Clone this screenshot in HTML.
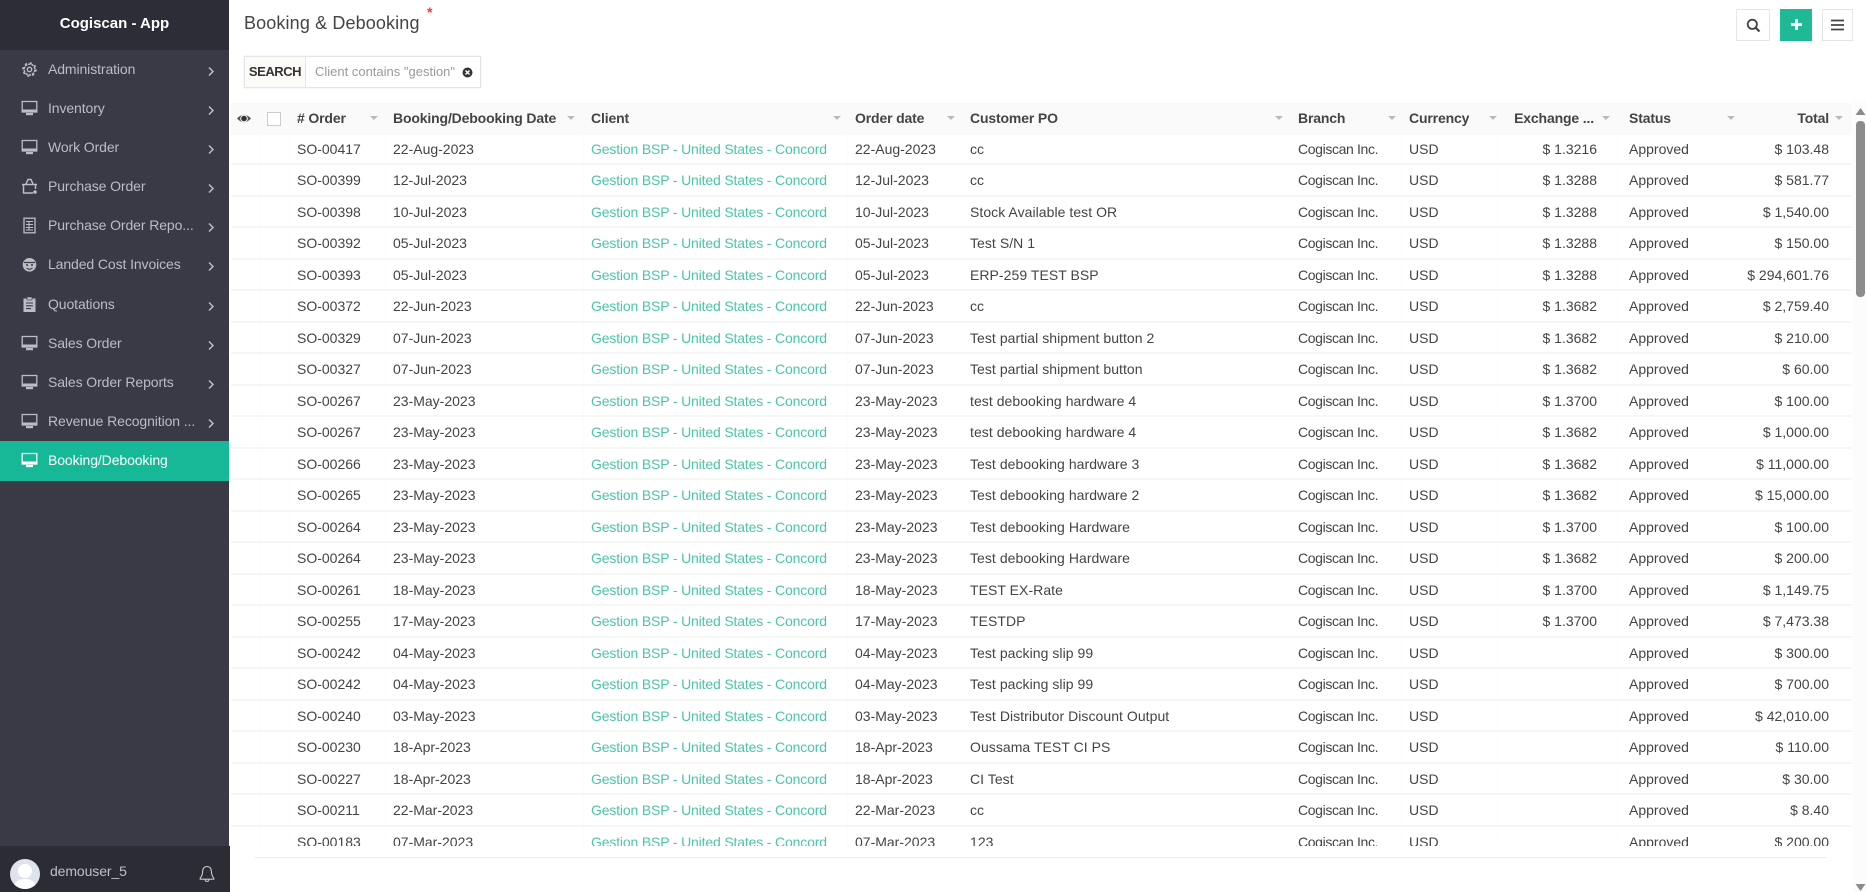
<!DOCTYPE html>
<html><head><meta charset="utf-8"><title>Booking & Debooking</title>
<style>
*{box-sizing:border-box}
html,body{margin:0;padding:0;width:1866px;height:892px;overflow:hidden;background:#fff;font-family:"Liberation Sans",sans-serif;font-size:14px;color:#444}
body{filter:blur(.3px)}
.abs{position:absolute}
#side{position:absolute;left:0;top:0;width:229px;height:892px;background:#3a3a46}
#top{position:absolute;left:0;top:0;width:229px;height:50px;background:#2d2d37;color:#fff;font-weight:bold;font-size:15px;line-height:48px;text-align:center}
.m{position:absolute;left:0;width:229px;height:39px;line-height:39px;color:#bcbcc2;font-size:14px;white-space:nowrap}
.m b{font-weight:normal;position:absolute;left:48px;letter-spacing:-.1px}
.m svg.i{position:absolute;left:21px;top:11px;width:17px;height:17px}
.m svg.c{position:absolute;left:207px;top:16px;width:8px;height:11px}
.m.a{background:#17b897;color:#fff;height:40px;top:441px}
#foot{position:absolute;left:0;top:846px;width:230px;height:46px;background:#2c2c35}
#foot .av{position:absolute;left:10px;top:13px;width:30px;height:30px;border-radius:50%;background:#dfe3ec;overflow:hidden}
#foot span{position:absolute;left:50px;top:17px;color:#bcc0c8;font-size:14px;letter-spacing:-.1px}
h1{position:absolute;left:244px;top:10px;margin:0;font-weight:normal;font-size:18px;line-height:26px;color:#444;letter-spacing:.13px}
#srch{position:absolute;left:244px;top:56px;width:237px;height:32px;border:1px solid #e4e4e4;box-shadow:0 0 1px #ddd;background:#fff}
#srch i{font-style:normal;position:absolute;left:0;top:0;width:61px;height:30px;line-height:30px;text-align:center;font-weight:bold;font-size:13px;letter-spacing:-.45px;color:#333;background:#fcfbf8;border-right:1px solid #e4e4e4}
#srch u{text-decoration:none;position:absolute;left:70px;top:0;line-height:30px;color:#999;font-size:13px;white-space:nowrap}
.btn{position:absolute;top:9px;height:32px;border:1px solid #e6e6e6;background:#fff}
#head{position:absolute;left:231px;top:103px;width:1621px;height:32px;background:#fafafa;z-index:2;font-weight:bold;line-height:31px;color:#444;letter-spacing:-.15px}
#head span{position:absolute;top:0;white-space:nowrap}
#head em{position:absolute;top:13px;width:0;height:0;border-left:4px solid transparent;border-right:4px solid transparent;border-top:4px solid #bbb}
#body{position:absolute;left:231px;top:135px;width:1621px;height:711px;overflow:hidden}
#rows{position:absolute;left:0;top:-1.5px;width:1621px}
.r{position:relative;height:31.5px;border-bottom:2px solid #f6f6f6;line-height:31px}
.r span{position:absolute;top:0;white-space:nowrap}
.r span:nth-child(1){left:66px}
.r span:nth-child(2){left:162px}
.r span:nth-child(3){left:360px;color:#4cc5a6;letter-spacing:-.16px}
.r span:nth-child(4){left:624px}
.r span:nth-child(5){left:739px;letter-spacing:.05px}
.r span:nth-child(6){left:1067px;letter-spacing:-.36px}
.r span:nth-child(7){left:1178px}
.r span:nth-child(8){right:255px}
.r span:nth-child(9){left:1398px}
.r span:nth-child(10){right:23px}
.v{position:absolute;top:135px;height:711px;width:1px;background:#fcfcfc}
</style></head><body>
<svg width="0" height="0" style="position:absolute"><defs>
<symbol id="mon" viewBox="0 0 17 17"><rect x="1.2" y="1.5" width="14.6" height="10.5" fill="none" stroke="#bcbcc2" stroke-width="1.3"/><rect x="1" y="9.5" width="15" height="3" fill="#bcbcc2"/><rect x="5" y="13" width="7" height="2.2" fill="#bcbcc2"/></symbol>
<symbol id="monw" viewBox="0 0 17 17"><rect x="1.2" y="1.5" width="14.6" height="10.5" fill="none" stroke="#fff" stroke-width="1.3"/><rect x="1" y="9.5" width="15" height="3" fill="#fff"/><rect x="5" y="13" width="7" height="2.2" fill="#fff"/></symbol>
<symbol id="chev" viewBox="0 0 8 11"><path d="M2 1.5 L6 5.5 L2 9.5" fill="none" stroke="#bcbcc2" stroke-width="1.5"/></symbol>
</defs></svg>

<div id="side">
<div id="top">Cogiscan - App</div>
<div class="m" style="top:50px"><svg class="i" viewBox="0 0 17 17"><circle cx="8.5" cy="8.5" r="5.4" fill="none" stroke="#bcbcc2" stroke-width="1.5" stroke-dasharray="2.6 .8"/><circle cx="8.5" cy="8.5" r="6.6" fill="none" stroke="#bcbcc2" stroke-width="1.4" stroke-dasharray="2.2 3"/><circle cx="8.5" cy="8.5" r="2.2" fill="none" stroke="#bcbcc2" stroke-width="1.4"/></svg><b>Administration</b><svg class="c"><use href="#chev"/></svg></div>
<div class="m" style="top:89px"><svg class="i"><use href="#mon"/></svg><b>Inventory</b><svg class="c"><use href="#chev"/></svg></div>
<div class="m" style="top:128px"><svg class="i"><use href="#mon"/></svg><b>Work Order</b><svg class="c"><use href="#chev"/></svg></div>
<div class="m" style="top:167px"><svg class="i" viewBox="0 0 17 17"><path d="M1 6.5H16M2.5 6.5V15H12M14.5 6.5V11M5 6L7 1.5H10L12 6" fill="none" stroke="#bcbcc2" stroke-width="1.5"/><circle cx="14" cy="14" r="1.8" fill="#bcbcc2"/></svg><b>Purchase Order</b><svg class="c"><use href="#chev"/></svg></div>
<div class="m" style="top:206px"><svg class="i" viewBox="0 0 17 17"><rect x="3" y="1.2" width="11" height="14.6" fill="none" stroke="#bcbcc2" stroke-width="1.3"/><path d="M5 4.5H12M5 7.5H12M5 10.5H12M5 13H12M8 4V13.5" fill="none" stroke="#bcbcc2" stroke-width="1"/></svg><b>Purchase Order Repo...</b><svg class="c"><use href="#chev"/></svg></div>
<div class="m" style="top:245px"><svg class="i" viewBox="0 0 17 17"><circle cx="8.5" cy="8.8" r="6.8" fill="#bcbcc2"/><path d="M3 6.5H14" stroke="#3a3a46" stroke-width="1.2"/><circle cx="6" cy="9" r="1" fill="#3a3a46"/><circle cx="11" cy="9" r="1" fill="#3a3a46"/><path d="M5.5 12Q8.5 14.5 11.5 12" fill="none" stroke="#3a3a46" stroke-width="1.1"/></svg><b>Landed Cost Invoices</b><svg class="c"><use href="#chev"/></svg></div>
<div class="m" style="top:284.5px"><svg class="i" viewBox="0 0 17 17"><rect x="2.5" y="2.5" width="12" height="13.5" fill="#bcbcc2"/><rect x="6" y="1" width="5" height="3" fill="#bcbcc2" stroke="#3a3a46" stroke-width=".6"/><path d="M5 7H12M5 9.8H12M5 12.6H10" stroke="#3a3a46" stroke-width="1.1"/></svg><b>Quotations</b><svg class="c"><use href="#chev"/></svg></div>
<div class="m" style="top:324px"><svg class="i"><use href="#mon"/></svg><b>Sales Order</b><svg class="c"><use href="#chev"/></svg></div>
<div class="m" style="top:363px"><svg class="i"><use href="#mon"/></svg><b>Sales Order Reports</b><svg class="c"><use href="#chev"/></svg></div>
<div class="m" style="top:402px"><svg class="i"><use href="#mon"/></svg><b>Revenue Recognition ...</b><svg class="c"><use href="#chev"/></svg></div>
<div class="m a"><svg class="i"><use href="#monw"/></svg><b>Booking/Debooking</b></div>
</div>
<div id="foot">
<div class="av"><svg width="30" height="30" viewBox="0 0 30 30"><circle cx="15" cy="12" r="7" fill="#fff"/><path d="M3 30Q5 20 15 20Q25 20 27 30Z" fill="#fff"/></svg></div>
<span>demouser_5</span>
<svg class="abs" style="left:199px;top:19px" width="16" height="18" viewBox="0 0 16 18"><path d="M8 1.5C4.8 1.5 3.6 4 3.6 6.5C3.6 10 2.6 11.5 1.2 13.2V14.2H14.8V13.2C13.4 11.5 12.4 10 12.4 6.5C12.4 4 11.2 1.5 8 1.5ZM6 14.5C6 17 10 17 10 14.5" fill="none" stroke="#c8c8cc" stroke-width="1.1"/></svg>
</div>

<h1>Booking &amp; Debooking</h1>
<div class="abs" style="left:427px;top:4px;color:#f33;font-size:14px;font-weight:bold">*</div>
<div id="srch"><i>SEARCH</i><u>Client contains "gestion"</u>
<svg class="abs" style="left:217px;top:10px" width="11" height="11" viewBox="0 0 11 11"><circle cx="5.5" cy="5.5" r="5" fill="#333"/><path d="M3.5 3.5L7.5 7.5M7.5 3.5L3.5 7.5" stroke="#fff" stroke-width="1.4"/></svg></div>

<div class="btn" style="left:1736px;width:34px"><svg class="abs" style="left:9px;top:8px" width="15" height="15" viewBox="0 0 15 15"><circle cx="6.3" cy="6.3" r="4.6" fill="none" stroke="#444" stroke-width="1.8"/><path d="M9.8 9.8L13.5 13.5" stroke="#444" stroke-width="2.2"/></svg></div>
<div class="btn" style="left:1780px;width:32px;background:#1fb995;border-color:#1fb995"><svg class="abs" style="left:9px;top:8px" width="13" height="13" viewBox="0 0 13 13"><path d="M6.5 1V12M1 6.5H12" stroke="#fff" stroke-width="3"/></svg></div>
<div class="btn" style="left:1822px;width:31px"><svg class="abs" style="left:8px;top:9px" width="13" height="12" viewBox="0 0 13 12"><path d="M0 1.5H13M0 6H13M0 10.5H13" stroke="#444" stroke-width="1.8"/></svg></div>

<div id="head">
<svg class="abs" style="left:5px;top:9px" width="16" height="13" viewBox="0 0 15 13"><path d="M.5 6.5Q7.5-1 14.5 6.5Q7.5 14 .5 6.5Z" fill="#555"/><circle cx="7.5" cy="6.5" r="3.8" fill="#fff"/><circle cx="7.5" cy="6.5" r="2.8" fill="#333"/></svg>
<div class="abs" style="left:36px;top:9px;width:14px;height:14px;background:#fff;border:1px solid #ccc"></div>
<span style="left:66px"># Order</span><em style="left:139px"></em>
<span style="left:162px">Booking/Debooking Date</span><em style="left:336px"></em>
<span style="left:360px">Client</span><em style="left:602px"></em>
<span style="left:624px">Order date</span><em style="left:716px"></em>
<span style="left:739px">Customer PO</span><em style="left:1044px"></em>
<span style="left:1067px">Branch</span><em style="left:1157px"></em>
<span style="left:1178px">Currency</span><em style="left:1258px"></em>
<span style="right:258px">Exchange ...</span><em style="left:1371px"></em>
<span style="left:1398px">Status</span><em style="left:1496px"></em>
<span style="right:23px">Total</span><em style="left:1604px"></em>
</div>

<div class="v" style="left:260px"></div><div class="v" style="left:289px"></div><div class="v" style="left:385px"></div><div class="v" style="left:583px"></div><div class="v" style="left:847px"></div><div class="v" style="left:962px"></div><div class="v" style="left:1290px"></div><div class="v" style="left:1401px"></div><div class="v" style="left:1497px"></div><div class="v" style="left:1617px"></div>

<div id="body"><div id="rows">
<div class="r"><span>SO-00417</span><span>22-Aug-2023</span><span>Gestion BSP - United States - Concord</span><span>22-Aug-2023</span><span>cc</span><span>Cogiscan Inc.</span><span>USD</span><span>$ 1.3216</span><span>Approved</span><span>$ 103.48</span></div>
<div class="r"><span>SO-00399</span><span>12-Jul-2023</span><span>Gestion BSP - United States - Concord</span><span>12-Jul-2023</span><span>cc</span><span>Cogiscan Inc.</span><span>USD</span><span>$ 1.3288</span><span>Approved</span><span>$ 581.77</span></div>
<div class="r"><span>SO-00398</span><span>10-Jul-2023</span><span>Gestion BSP - United States - Concord</span><span>10-Jul-2023</span><span>Stock Available test OR</span><span>Cogiscan Inc.</span><span>USD</span><span>$ 1.3288</span><span>Approved</span><span>$ 1,540.00</span></div>
<div class="r"><span>SO-00392</span><span>05-Jul-2023</span><span>Gestion BSP - United States - Concord</span><span>05-Jul-2023</span><span>Test S/N 1</span><span>Cogiscan Inc.</span><span>USD</span><span>$ 1.3288</span><span>Approved</span><span>$ 150.00</span></div>
<div class="r"><span>SO-00393</span><span>05-Jul-2023</span><span>Gestion BSP - United States - Concord</span><span>05-Jul-2023</span><span>ERP-259 TEST BSP</span><span>Cogiscan Inc.</span><span>USD</span><span>$ 1.3288</span><span>Approved</span><span>$ 294,601.76</span></div>
<div class="r"><span>SO-00372</span><span>22-Jun-2023</span><span>Gestion BSP - United States - Concord</span><span>22-Jun-2023</span><span>cc</span><span>Cogiscan Inc.</span><span>USD</span><span>$ 1.3682</span><span>Approved</span><span>$ 2,759.40</span></div>
<div class="r"><span>SO-00329</span><span>07-Jun-2023</span><span>Gestion BSP - United States - Concord</span><span>07-Jun-2023</span><span>Test partial shipment button 2</span><span>Cogiscan Inc.</span><span>USD</span><span>$ 1.3682</span><span>Approved</span><span>$ 210.00</span></div>
<div class="r"><span>SO-00327</span><span>07-Jun-2023</span><span>Gestion BSP - United States - Concord</span><span>07-Jun-2023</span><span>Test partial shipment button</span><span>Cogiscan Inc.</span><span>USD</span><span>$ 1.3682</span><span>Approved</span><span>$ 60.00</span></div>
<div class="r"><span>SO-00267</span><span>23-May-2023</span><span>Gestion BSP - United States - Concord</span><span>23-May-2023</span><span>test debooking hardware 4</span><span>Cogiscan Inc.</span><span>USD</span><span>$ 1.3700</span><span>Approved</span><span>$ 100.00</span></div>
<div class="r"><span>SO-00267</span><span>23-May-2023</span><span>Gestion BSP - United States - Concord</span><span>23-May-2023</span><span>test debooking hardware 4</span><span>Cogiscan Inc.</span><span>USD</span><span>$ 1.3682</span><span>Approved</span><span>$ 1,000.00</span></div>
<div class="r"><span>SO-00266</span><span>23-May-2023</span><span>Gestion BSP - United States - Concord</span><span>23-May-2023</span><span>Test debooking hardware 3</span><span>Cogiscan Inc.</span><span>USD</span><span>$ 1.3682</span><span>Approved</span><span>$ 11,000.00</span></div>
<div class="r"><span>SO-00265</span><span>23-May-2023</span><span>Gestion BSP - United States - Concord</span><span>23-May-2023</span><span>Test debooking hardware 2</span><span>Cogiscan Inc.</span><span>USD</span><span>$ 1.3682</span><span>Approved</span><span>$ 15,000.00</span></div>
<div class="r"><span>SO-00264</span><span>23-May-2023</span><span>Gestion BSP - United States - Concord</span><span>23-May-2023</span><span>Test debooking Hardware</span><span>Cogiscan Inc.</span><span>USD</span><span>$ 1.3700</span><span>Approved</span><span>$ 100.00</span></div>
<div class="r"><span>SO-00264</span><span>23-May-2023</span><span>Gestion BSP - United States - Concord</span><span>23-May-2023</span><span>Test debooking Hardware</span><span>Cogiscan Inc.</span><span>USD</span><span>$ 1.3682</span><span>Approved</span><span>$ 200.00</span></div>
<div class="r"><span>SO-00261</span><span>18-May-2023</span><span>Gestion BSP - United States - Concord</span><span>18-May-2023</span><span>TEST EX-Rate</span><span>Cogiscan Inc.</span><span>USD</span><span>$ 1.3700</span><span>Approved</span><span>$ 1,149.75</span></div>
<div class="r"><span>SO-00255</span><span>17-May-2023</span><span>Gestion BSP - United States - Concord</span><span>17-May-2023</span><span>TESTDP</span><span>Cogiscan Inc.</span><span>USD</span><span>$ 1.3700</span><span>Approved</span><span>$ 7,473.38</span></div>
<div class="r"><span>SO-00242</span><span>04-May-2023</span><span>Gestion BSP - United States - Concord</span><span>04-May-2023</span><span>Test packing slip 99</span><span>Cogiscan Inc.</span><span>USD</span><span></span><span>Approved</span><span>$ 300.00</span></div>
<div class="r"><span>SO-00242</span><span>04-May-2023</span><span>Gestion BSP - United States - Concord</span><span>04-May-2023</span><span>Test packing slip 99</span><span>Cogiscan Inc.</span><span>USD</span><span></span><span>Approved</span><span>$ 700.00</span></div>
<div class="r"><span>SO-00240</span><span>03-May-2023</span><span>Gestion BSP - United States - Concord</span><span>03-May-2023</span><span>Test Distributor Discount Output</span><span>Cogiscan Inc.</span><span>USD</span><span></span><span>Approved</span><span>$ 42,010.00</span></div>
<div class="r"><span>SO-00230</span><span>18-Apr-2023</span><span>Gestion BSP - United States - Concord</span><span>18-Apr-2023</span><span>Oussama TEST CI PS</span><span>Cogiscan Inc.</span><span>USD</span><span></span><span>Approved</span><span>$ 110.00</span></div>
<div class="r"><span>SO-00227</span><span>18-Apr-2023</span><span>Gestion BSP - United States - Concord</span><span>18-Apr-2023</span><span>CI Test</span><span>Cogiscan Inc.</span><span>USD</span><span></span><span>Approved</span><span>$ 30.00</span></div>
<div class="r"><span>SO-00211</span><span>22-Mar-2023</span><span>Gestion BSP - United States - Concord</span><span>22-Mar-2023</span><span>cc</span><span>Cogiscan Inc.</span><span>USD</span><span></span><span>Approved</span><span>$ 8.40</span></div>
<div class="r"><span>SO-00183</span><span>07-Mar-2023</span><span>Gestion BSP - United States - Concord</span><span>07-Mar-2023</span><span>123</span><span>Cogiscan Inc.</span><span>USD</span><span></span><span>Approved</span><span>$ 200.00</span></div>
</div></div>

<div class="abs" style="left:255px;top:857px;width:1571px;height:1px;background:#eaeaea"></div>
<div class="abs" style="left:1853px;top:100px;width:13px;height:792px;background:#fcfcfc"></div>
<svg class="abs" style="left:1855px;top:107px" width="11" height="8" viewBox="0 0 11 8"><path d="M5.5 1L10.5 8H.5Z" fill="#8c8c8c"/></svg>
<div class="abs" style="left:1856px;top:121px;width:9px;height:176px;background:#8c8c8c;border-radius:4px"></div>
<svg class="abs" style="left:1855px;top:884px" width="11" height="8" viewBox="0 0 11 8"><path d="M5.5 7L10.5 0H.5Z" fill="#8c8c8c"/></svg>
</body></html>
